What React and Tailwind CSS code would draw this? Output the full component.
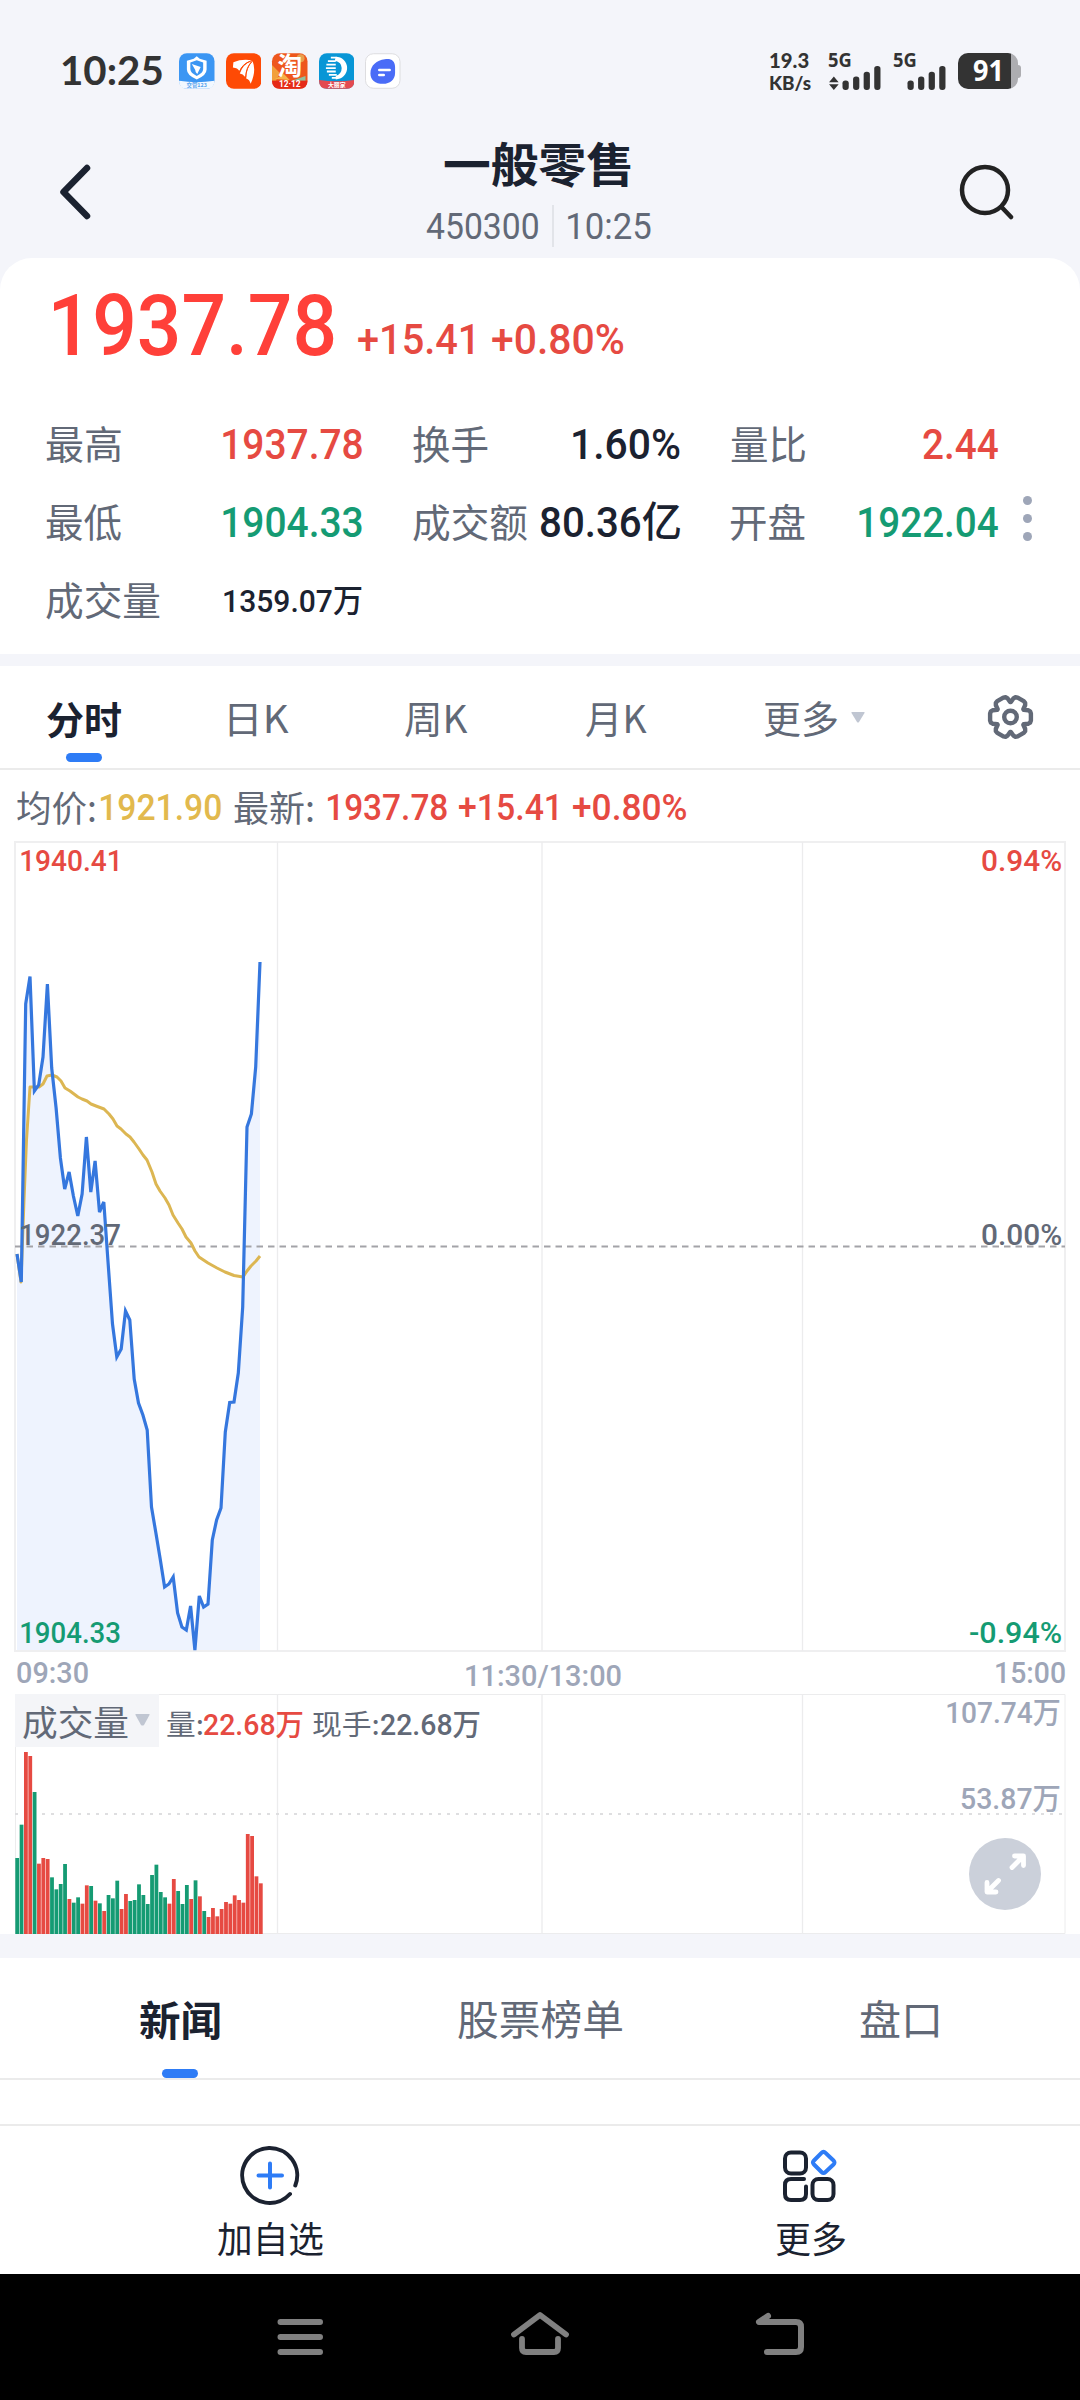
import { useLayoutEffect, useRef, useState } from "react";

const NUM = "font-['Roboto','Noto_Sans_CJK_SC',sans-serif]";
const CJK = "font-['Noto_Sans_CJK_SC',sans-serif]";
const LIFT = " -translate-y-[2px] ";

// Text whose ink is condensed or stretched to an exact width.
function Fit({ w, className = "", children }) {
  const ref = useRef(null);
  const [t, setT] = useState("none");
  useLayoutEffect(() => {
    const cs = getComputedStyle(ref.current);
    const ctx = document.createElement("canvas").getContext("2d");
    ctx.font = `${cs.fontWeight} ${cs.fontSize} ${cs.fontFamily}`;
    const m = ctx.measureText(children);
    const s = w / (m.actualBoundingBoxLeft + m.actualBoundingBoxRight);
    setT(`translateX(${m.actualBoundingBoxLeft * s}px) scaleX(${s})`);
  }, [w, children]);
  return (
    <span className={"block shrink-0 whitespace-nowrap leading-none " + className} style={{ width: w }}>
      <span ref={ref} className="inline-block origin-left" style={{ transform: t }}>
        {children}
      </span>
    </span>
  );
}

function AppIcons() {
  return (
    <div className="ml-[17px] flex gap-[11px]">
      <svg width="35.5" height="36" viewBox="0 0 36 36">
        <rect width="36" height="36" rx="8" fill="#3b96f3" />
        <path d="M0 28Q18 31 36 28Q36 36 28 36H8Q0 36 0 28Z" fill="#f2f8ff" />
        <path d="M18 3l3 2.5 7 2v9q0 6-10 10q-10-4-10-10v-9l7-2z" fill="#fff" />
        <path d="M18 7l6.500 2.500v6.500q0 4-6.500 7q-6.500-3-6.500-7V9.500z" fill="#3b96f3" />
        <path d="M13 11l9 3-3.500 7q-2-1-2-4z" fill="#fff" />
        <text x="18" y="34.500" fontSize="5.500" fontWeight="700" textAnchor="middle" fill="#5aa5ee" fontFamily="Noto Sans CJK SC">交管123</text>
      </svg>
      <svg width="35.5" height="36" viewBox="0 0 36 36">
        <rect width="36" height="36" rx="8" fill="#fe4a05" />
        <path d="M7.500 9Q16 5.500 26 7Q17 10 13.500 18Q12 15 7 14.500Z" fill="#fff" />
        <path d="M14 20.500Q17 11 26.500 7.500Q20.500 14 19.500 24Q17 21 14 20.500Z" fill="#fff" />
        <path d="M20.500 25.500Q20.500 15 27 8Q31 18 25 31Q24 26.500 20.500 25.500Z" fill="#fff" />
        <path d="M25 8Q16 11 13.700 19M26 8.500Q20 15 20 24.500" stroke="#fe4a05" strokeWidth="1" fill="none" />
      </svg>
      <svg className="overflow-visible" width="35.5" height="36" viewBox="0 0 36 36">
        <rect width="36" height="36" rx="8" fill="#ee571d" />
        <path d="M0 12L8 20L4 28H0Z" fill="#f2a03c" />
        <circle cx="29" cy="5" r="4" fill="#e8a04e" />
        <path d="M20 28L34 23V28Z" fill="#8fc0a0" />
        <path d="M3 26L12 21L18 27Z" fill="#f6b24a" />
        <path d="M0 28H36Q36 36 28 36H8Q0 36 0 28Z" fill="#e52a17" />
        <text x="18" y="22.500" fontSize="25" fontWeight="700" textAnchor="middle" fill="#fff" fontFamily="Noto Sans CJK SC">淘</text>
        <text x="18" y="34.500" fontSize="8.500" fontWeight="700" textAnchor="middle" fill="#fff" fontFamily="Roboto">12·12</text>
      </svg>
      <svg width="35.5" height="36" viewBox="0 0 36 36">
        <rect width="36" height="36" rx="8" fill="#0896d6" />
        <path d="M0 27Q18 30 36 27Q36 36 28 36H8Q0 36 0 27Z" fill="#e34a50" />
        <path d="M17 3.500A11.500 11.500 0 1 1 17 26.500L17 23Q23 21 23 15Q23 9 16 7.500Z" fill="#fff" />
        <path d="M18 4.500H12M17 8H9M17 11.500H7.500M17 15H7M17 18.500H8M18 22H10M19 25H13" stroke="#fff" strokeWidth="1.800" />
        <text x="18" y="34" fontSize="6" fontWeight="700" textAnchor="middle" fill="#fff" fontFamily="Noto Sans CJK SC">大丽家</text>
      </svg>
      <svg width="35.5" height="36" viewBox="0 0 36 36">
        <rect x=".5" y=".5" width="35" height="35" rx="8" fill="#fff" stroke="#dcdcdf" />
        <path d="M20 6C26 5 30.500 7 30.500 14V20C30.500 27 25 31 18.500 31C10 31 5.500 27 5.500 20.500C5.500 12 12 7 20 6Z" fill="#4a6cf7" />
        <path d="M14.500 17H25M14.500 22H19" stroke="#fff" strokeWidth="2.600" strokeLinecap="round" />
      </svg>
    </div>
  );
}

function Signal({ arrows }) {
  return (
    <div className="flex h-[38px] w-[54px] flex-col">
      <Fit w={23} className="-translate-y-px font-['Open_Sans'] text-[19px] font-bold">5G</Fit>
      <svg className="-mt-[6px]" width="54" height="26" viewBox="0 0 54 26" fill="#333">
        {arrows && <path d="M0 18L5 12L10 18ZM0 20H10L5 26Z" />}
        <rect x="14" y="16" width="6.500" height="10" rx="3" />
        <rect x="25" y="12" width="6.500" height="14" rx="3" />
        <rect x="36" y="7" width="6.500" height="19" rx="3" />
        <rect x="47" y="1" width="6.500" height="25" rx="3" />
      </svg>
    </div>
  );
}

function StatusBar() {
  return (
    <div className="flex h-[142px] shrink-0 items-center pl-[62px] text-[#333]">
      <Fit w={100} className={LIFT + "font-['Lato'] text-[41px] font-bold"}>10:25</Fit>
      <AppIcons />
      <div className="ml-[369px] flex w-[44px] -translate-y-px flex-col gap-[4px]">
        <Fit w={39} className="font-['Lato'] text-[21px] font-black">19.3</Fit>
        <Fit w={41} className="font-['Lato'] text-[18px] font-black">KB/s</Fit>
      </div>
      <div className="ml-[14px] flex gap-[11px]">
        <Signal arrows />
        <Signal />
      </div>
      <div className="ml-[11px] flex items-center">
        <div className="flex h-9 w-[60px] items-center overflow-hidden rounded-[10px] bg-[linear-gradient(90deg,#333_53px,#adadb1_53px)] pl-[15px]">
          <Fit w={27} className="-translate-y-px font-['Open_Sans'] text-[28px] font-bold text-white">91</Fit>
        </div>
        <div className="h-[13px] w-[3px] rounded-r-[3px] bg-[#adadb1]" />
      </div>
    </div>
  );
}

function Header() {
  return (
    <div className="flex h-[116px] shrink-0 justify-between pl-[58px] pr-[66px]">
      <svg className="mt-[21px]" width="36" height="60" viewBox="0 0 36 60" fill="none" stroke="#1b2230" strokeWidth="6.500" strokeLinecap="round" strokeLinejoin="round">
        <path d="M29 5L5.500 29L29 53" />
      </svg>
      <div className="ml-[25px] flex w-[226px] flex-col text-[#1b2230]">
        <Fit w={187} className={CJK + " ml-[18px] h-[47px] -translate-y-[4px] text-[47px] font-bold"}>一般零售</Fit>
        <div className={NUM + " mt-[16px] flex h-[42px] items-center text-[37px] text-[#626977]"}>
          <Fit w={112}>450300</Fit>
          <div className="mx-[14px] h-[42px] w-[2px] shrink-0 bg-[#e2e4e9]" />
          <Fit w={83}>10:25</Fit>
        </div>
      </div>
      <svg className="mt-[21px]" width="56" height="60" viewBox="0 0 56 60" fill="none" stroke="#222" strokeWidth="4.500" strokeLinecap="round">
        <circle cx="27" cy="27" r="23" />
        <path d="M43.500 44L53 54" />
      </svg>
    </div>
  );
}

const RED = "text-[#e64a42]";
const GREEN = "text-[#159b73]";
const DARK = "text-[#1b2230]";

function Stat({ label, lw, value, vw, color, size = "text-[42px]" }) {
  return (
    <div className="flex items-center justify-between">
      <Fit w={lw} className={CJK + " -translate-y-[3px] text-[39px] text-[#626977]"}>{label}</Fit>
      <Fit w={vw} className={NUM + " font-medium " + size + " " + color}>{value}</Fit>
    </div>
  );
}

function Quote() {
  return (
    <div className="h-[396px] shrink-0 rounded-t-[32px] bg-white pt-[39px]">
      <div className={NUM + " flex h-[72px] items-end pl-[54px] font-medium"}>
        <Fit w={280} className="text-[85px] text-[#ff4039]">1937.78</Fit>
        <Fit w={115} className={"mb-[8px] ml-[24px] text-[42px] " + RED}>+15.41</Fit>
        <Fit w={132} className={"mb-[8px] ml-[19px] text-[42px] " + RED}>+0.80%</Fit>
      </div>
      <div className="mt-[37px] flex">
        <div className="ml-[46px] grid w-[952px] grid-cols-[316px_267px_267px] grid-rows-[78px_78px_78px] gap-x-[51px]">
          <Stat label="最高" lw={75} value="1937.78" vw={139} color={RED} />
          <Stat label="换手" lw={75} value="1.60%" vw={107} color={DARK} />
          <Stat label="量比" lw={74} value="2.44" vw={75} color={RED} />
          <Stat label="最低" lw={75} value="1904.33" vw={139} color={GREEN} />
          <Stat label="成交额" lw={114} value="80.36亿" vw={139} color={DARK} />
          <Stat label="开盘" lw={74} value="1922.04" vw={139} color={GREEN} />
          <Stat label="成交量" lw={114} value="1359.07万" vw={138} color={DARK} size="text-[32px]" />
        </div>
        <div className="ml-[25px] mt-[90px] flex flex-col gap-[9px]">
          <div className="size-[9px] rounded-full bg-[#9ea6b8]" />
          <div className="size-[9px] rounded-full bg-[#9ea6b8]" />
          <div className="size-[9px] rounded-full bg-[#9ea6b8]" />
        </div>
      </div>
    </div>
  );
}

// One tooth of the gear, pointing right; repeated every 60 degrees.
const TOOTH = [[13.2, -7.2], [17.5, -6.8], [19.6, -5.6], [20.4, -3.5], [20.4, 3.5], [19.6, 5.6], [17.5, 6.8], [13.2, 7.2]];
const gearPoints = [0, 1, 2, 3, 4, 5]
  .flatMap((k) => {
    const c = Math.cos((k * Math.PI) / 3);
    const s = Math.sin((k * Math.PI) / 3);
    return TOOTH.map(([x, y]) => `${(x * c - y * s).toFixed(2)},${(x * s + y * c).toFixed(2)}`);
  })
  .join(" ");

function Gear() {
  return (
    <svg className="ml-[122px]" width="47" height="46" viewBox="-23.5 -23 47 46" fill="none" stroke="#626977" strokeWidth="4.400" strokeLinejoin="round">
      <circle r="6.300" />
      <polygon points={gearPoints} />
    </svg>
  );
}

function PeriodTabs() {
  return (
    <div className="h-[104px] shrink-0 border-b-2 border-[#ebebeb] bg-white">
      <div className={CJK + " flex h-[102px] items-center pl-[47px] text-[38px] text-[#626977]"}>
        <div className="flex h-full flex-col items-center pt-[35px]">
          <Fit w={74} className={LIFT + "font-bold " + DARK}>分时</Fit>
          <div className="mt-[14px] h-[9px] w-9 rounded-full bg-[#2e7cf6]" />
        </div>
        <Fit w={60} className="ml-[108px]">日K</Fit>
        <Fit w={63} className="ml-[116px]">周K</Fit>
        <Fit w={61} className="ml-[118px]">月K</Fit>
        <Fit w={73} className="ml-[117px]">更多</Fit>
        <svg className="ml-[14px]" width="14" height="11" fill="#c0c6d2"><path d="M1 0H13Q14 0 13.500 1L8 10Q7 11 6 10L.5 1Q0 0 1 0Z" /></svg>
        <Gear />
      </div>
    </div>
  );
}

const PRICE = [1254, 1282, 1004, 976.5, 1091, 1085, 1057, 984, 1068, 1108, 1158, 1189, 1172, 1196, 1216, 1194, 1137, 1192, 1161, 1212, 1202, 1263, 1324, 1357, 1349, 1311, 1320, 1379, 1403, 1415, 1430, 1507, 1533, 1559, 1587, 1584, 1577, 1613, 1627, 1630, 1606, 1650, 1596, 1607, 1604, 1540, 1520, 1508, 1432, 1402.5, 1402, 1373, 1307, 1127, 1114, 1067, 962];
const STEP = 4.34;
const priceLine = PRICE.map((y, i) => `${(17 + i * STEP).toFixed(1)},${y}`).join(" ");
const AVG = "17,1254 21,1282 24,1200 26.500,1140 30,1087 39,1087 43,1084 47,1076 52,1075 57,1077 61,1081 65,1088 70,1091 74,1094 78,1097 82,1099 87,1101 91,1104 96,1106 104,1109 109,1114 113,1119 117,1126 121,1129 126,1134 130,1137 134,1142 139,1149 143,1155 147,1160 152,1172 156,1184 160,1191 165,1198 169,1205 173,1215 178,1223 182,1229 186,1237 191,1243 195,1251 199,1257 208,1263 217,1268 225,1272 234,1275.5 243,1277 247,1271 251,1266 256,1261 260,1256";

const LABEL = NUM + " absolute font-medium text-[30px] ";

function PriceChart() {
  return (
    <div className="bg-white">
      <div className={NUM + " flex h-[71px] items-center pl-[17px] pt-[5px] text-[36px] text-[#626977]"}>
        <Fit w={78} className={LIFT + CJK}>均价:</Fit>
        <Fit w={121} className="ml-[5px] font-medium text-[#e2b94d]">1921.90</Fit>
        <Fit w={79} className={"ml-[13px] " + LIFT + CJK}>最新:</Fit>
        <Fit w={120} className={"ml-[14px] font-medium " + RED}>1937.78</Fit>
        <Fit w={98} className={"ml-[12px] font-medium " + RED}>+15.41</Fit>
        <Fit w={113} className={"ml-[16px] font-medium " + RED}>+0.80%</Fit>
      </div>
      <div className="relative h-[811px]">
        <svg className="block" width="1080" height="811" viewBox="0 841 1080 811" fill="none">
          <polygon points={`17,1651 ${priceLine} 260,1651`} fill="#eef3fe" />
          <rect x="15" y="842" width="1050" height="809" stroke="#efeff0" strokeWidth="2" />
          <path d="M277.5 842V1651M542 842V1651M802.5 842V1651" stroke="#ececed" strokeWidth="1.300" />
          <path d="M15 1246.500H1065" stroke="#a3a3a8" strokeWidth="1.800" strokeDasharray="6.500 5" />
          <polyline points={AVG} stroke="#dcb652" strokeWidth="3" strokeLinejoin="round" />
          <polyline points={priceLine} stroke="#3577de" strokeWidth="3.200" />
        </svg>
        <Fit w={97} className={LABEL + "left-[21px] top-[5px] " + RED}>1940.41</Fit>
        <Fit w={79} className={LABEL + "left-[982px] top-[5px] " + RED}>0.94%</Fit>
        <Fit w={99} className={LABEL + "left-[21px] top-[379px] text-[#626977]"}>1922.37</Fit>
        <Fit w={79} className={LABEL + "left-[982px] top-[379px] text-[#626977]"}>0.00%</Fit>
        <Fit w={99} className={LABEL + "left-[21px] top-[777px] " + GREEN}>1904.33</Fit>
        <Fit w={91} className={LABEL + "left-[970px] top-[777px] " + GREEN}>-0.94%</Fit>
      </div>
      <div className={NUM + " flex h-[41px] items-center pl-[17px] text-[30px] font-medium text-[#9ea6b8]"}>
        <Fit w={71}>09:30</Fit>
        <Fit w={155} className="ml-[378px] mt-[6px]">11:30/13:00</Fit>
        <Fit w={69} className="ml-[375px]">15:00</Fit>
      </div>
    </div>
  );
}

// Bar tops measured down from the panel; a leading g marks a falling minute.
const VOLUME = "g534 g434 r216 r228 g336 r551 r534 r537 g592 g628 g612 g552 r657 g668 g652 r671 r616 g618 r662 g670 r693 g645 g655 g602 r687 r642 g663 g660 g613 g645 g672 g585 g554 g636 g652 r671 r597 g633 g672 g615 r657 g601 r649 g693 r711 r684 r709 r687 r666 r671 r646 r660 r668 r462 r468 r589 r610".split(" ");

function VolumeChart() {
  return (
    <div className="relative h-[241px] shrink-0 bg-white">
      <svg className="block" width="1080" height="241" viewBox="0 1693 1080 241" fill="none">
        <path d="M15.5 1694.500H1065V1933.500H15.5Z" stroke="#ececed" strokeWidth="1" />
        <path d="M277.5 1694V1934M542 1694V1934M802.5 1694V1934" stroke="#ececed" strokeWidth="1.300" />
        <path d="M15 1814H1065" stroke="#dedee0" strokeWidth="2" strokeDasharray="3 6" />
        {VOLUME.map((v, i) => {
          const y = 1680 + Number(v.slice(1)) / 3;
          return <rect key={i} x={15.3 + i * 4.35} y={y} width="3.800" height={1934 - y} fill={v[0] === "g" ? "#159b73" : "#e64a42"} />;
        })}
      </svg>
      <div className={NUM + " absolute left-[15px] top-[1px] flex h-[53px] items-center text-[30px] text-[#626977]"}>
        <div className="flex h-full w-[144px] items-center gap-[7px] bg-[#f4f5f8] pl-[8px]">
          <Fit w={105} className={CJK + " text-[35px]"}>成交量</Fit>
          <svg className="-mt-[2px]" width="15" height="12" fill="#c0c6d2"><path d="M1 0H14Q15 0 14.500 1L9 11Q7.500 12 6 11L.5 1Q0 0 1 0Z" /></svg>
        </div>
        <div className="mt-[9px] flex items-center">
          <Fit w={35} className={CJK + LIFT + "ml-[8px] text-[28px]"}>量:</Fit>
          <Fit w={99} className={"ml-[2px] font-medium " + RED}>22.68万</Fit>
          <Fit w={65} className={CJK + LIFT + "ml-[10px] text-[28px]"}>现手:</Fit>
          <Fit w={99} className="ml-[3px] font-medium">22.68万</Fit>
        </div>
      </div>
      <Fit w={113} className={LABEL + "left-[947px] top-[5px] text-[#9ea6b8]"}>107.74万</Fit>
      <Fit w={99} className={LABEL + "left-[961px] top-[91px] text-[#9ea6b8]"}>53.87万</Fit>
      <svg className="absolute left-[969px] top-[145px]" width="72" height="72" viewBox="0 0 72 72" fill="none" stroke="#fff" strokeWidth="4.800" strokeLinecap="round" strokeLinejoin="round">
        <circle cx="36" cy="36" r="36" fill="#cbd0da" stroke="none" />
        <path d="M43 29.500L54 18.500M45.500 18H54.500V27.500M29.500 42.500L18.500 53.500M18 44.500V54H27" />
      </svg>
    </div>
  );
}

function NewsTabs() {
  return (
    <div className={CJK + " flex h-[122px] shrink-0 border-b-2 border-[#ebebeb] bg-white text-[41px] text-[#626977]"}>
      <div className="flex w-[360px] flex-col items-center pt-[42px]">
        <Fit w={80} className={LIFT + "font-bold " + DARK}>新闻</Fit>
        <div className="mt-auto h-[9px] w-9 rounded-full bg-[#2e7cf6]" />
      </div>
      <div className="flex w-[360px] justify-center pt-[39px]"><Fit w={164}>股票榜单</Fit></div>
      <div className="flex w-[357px] justify-center pt-[39px]"><Fit w={78}>盘口</Fit></div>
    </div>
  );
}

function Actions() {
  return (
    <div className={CJK + " grid h-[148px] shrink-0 grid-cols-2 bg-white text-[36px] " + DARK}>
      <div className="flex flex-col items-center pt-[19px]">
        <svg width="60" height="60" viewBox="0 0 60 60" fill="none" stroke="#1b2230" strokeWidth="4" strokeLinecap="round">
          <path d="M55.300 40.500A27.500 27.500 0 1 0 50 49" />
          <path d="M30 18.500V42.500M18.500 30.500H42" stroke="#2e7cf6" />
        </svg>
        <Fit w={105} className="mt-[14px]">加自选</Fit>
      </div>
      <div className="flex flex-col items-center pt-[19px]">
        <svg width="60" height="60" viewBox="0 0 60 60" fill="none" stroke="#1b2230" strokeWidth="4" strokeLinecap="round" strokeLinejoin="round">
          <rect x="5" y="7.500" width="21" height="21" rx="6" />
          <rect x="32.500" y="34" width="21" height="21" rx="6" />
          <path d="M24 34H11Q5 34 5 40V49Q5 55 11 55H20Q26 55 26 49V41.500" />
          <path d="M41.500 7.800Q43.500 5.800 45.500 7.800L53.500 15.500Q55.500 17.500 53.500 19.500L45.500 27Q43.500 29 41.500 27L34 19.500Q32 17.500 34 15.500Z" stroke="#2e7cf6" />
        </svg>
        <Fit w={69} className="mt-[14px]">更多</Fit>
      </div>
    </div>
  );
}

function NavBar() {
  return (
    <div className="flex h-[126px] shrink-0 justify-between bg-black pl-[276px] pr-[275px] pt-[36px]">
      <svg width="48" height="50" viewBox="0 0 48 50" stroke="#808080" strokeWidth="6" strokeLinecap="round">
        <path d="M4.500 12H44M4.500 27H44M4.500 42H44" />
      </svg>
      <svg width="60" height="50" viewBox="0 0 60 50" fill="none" stroke="#808080" strokeWidth="5.800" strokeLinecap="round" strokeLinejoin="round">
        <path d="M4 24.500L30 5L56 24.500M12 29V38Q12 42 16 42H44Q48 42 48 38V29" />
      </svg>
      <svg width="50" height="50" viewBox="0 0 50 50" fill="none" stroke="#808080" strokeWidth="6" strokeLinecap="round" strokeLinejoin="round">
        <path d="M13 6L4 12H41Q46 12 46 17V37Q46 42 41 42H12" />
      </svg>
    </div>
  );
}

export default function App() {
  return (
    <div className="flex h-[2400px] w-[1080px] flex-col overflow-hidden bg-[#f4f5fa]">
      <StatusBar />
      <Header />
      <Quote />
      <div className="h-3 shrink-0" />
      <PeriodTabs />
      <PriceChart />
      <VolumeChart />
      <div className="h-6 shrink-0" />
      <NewsTabs />
      <div className="h-[46px] shrink-0 border-b-2 border-[#ebebeb] bg-white" />
      <Actions />
      <NavBar />
    </div>
  );
}
